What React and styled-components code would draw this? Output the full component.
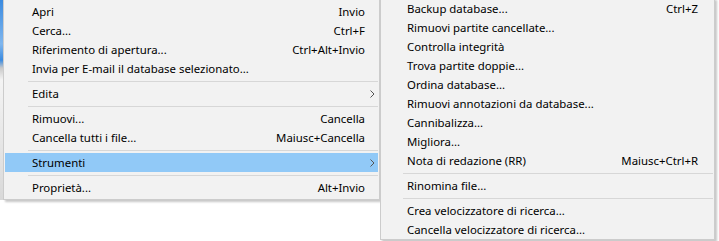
import React from 'react';
import styled, { createGlobalStyle } from 'styled-components';

const Global = createGlobalStyle`
  html, body {
    margin: 0;
    padding: 0;
    background: #ffffff;
    font-family: "Noto Sans", "Liberation Sans", sans-serif;
    font-size: 11.4px;
    color: #000;
  }
`;

const Screen = styled.div`
  width: 719px;
  height: 241px;
  overflow: hidden;
  display: flex;
  align-items: flex-start;
`;

// bit of the window behind the menus
const Backdrop = styled.div`
  width: 3px;
  height: 200px;
  flex: none;
  background: linear-gradient(
    to bottom,
    #3b8be0 0,
    #7fb6ee 22%,
    #3b8be0 30%,
    #c9c9c9 34%,
    #f4f4f4 40%,
    #d9d9d9 100%
  );
`;

const Menu = styled.div`
  box-sizing: border-box;
  flex: none;
  width: ${p => p.$width}px;
  margin-top: ${p => p.$top}px;
  background: #f2f2f2;
  border: 1px solid #cccccc;
  padding: ${p => p.$pad};
  box-shadow: 2px 2px 2px rgba(0, 0, 0, 0.22);
  display: flex;
  flex-direction: column;
`;

const Row = styled.div`
  display: grid;
  grid-template-columns: 1fr auto ${p => p.$tail}px;
  align-items: center;
  height: 19px;
  padding-left: ${p => p.$indent}px;
  background: ${p => (p.$active ? '#91c9f7' : 'transparent')};
  white-space: nowrap;
`;

const Label = styled.span`
  line-height: 19px;
`;

const Shortcut = styled.span`
  text-align: right;
  line-height: 19px;
`;

const Arrow = styled.span`
  display: flex;
  align-items: center;
  padding-left: 5px;
`;

const Separator = styled.div`
  height: 1px;
  background: #d7d7d7;
  margin: 3px 0 2px ${p => p.$indent}px;
`;

const Chevron = () => (
  <svg width="5" height="8" viewBox="0 0 5 8">
    <path d="M0.5 0.5 L4 4 L0.5 7.5" fill="none" stroke="#555" strokeWidth="1" />
  </svg>
);

const mainItems = [
  { label: 'Apri', key: 'Invio' },
  { label: 'Cerca...', key: 'Ctrl+F' },
  { label: 'Riferimento di apertura...', key: 'Ctrl+Alt+Invio' },
  { label: 'Invia per E-mail il database selezionato...' },
  'sep',
  { label: 'Edita', sub: true },
  'sep',
  { label: 'Rimuovi...', key: 'Cancella' },
  { label: 'Cancella tutti i file...', key: 'Maiusc+Cancella' },
  'sep',
  { label: 'Strumenti', sub: true, active: true },
  'sep',
  { label: 'Proprietà...', key: 'Alt+Invio' },
];

const toolItems = [
  { label: 'Backup database...', key: 'Ctrl+Z' },
  { label: 'Rimuovi partite cancellate...' },
  { label: 'Controlla integrità' },
  { label: 'Trova partite doppie...' },
  { label: 'Ordina database...' },
  { label: 'Rimuovi annotazioni da database...' },
  { label: 'Cannibalizza...' },
  { label: 'Migliora...' },
  { label: 'Nota di redazione (RR)', key: 'Maiusc+Ctrl+R' },
  'sep',
  { label: 'Rinomina file...' },
  'sep',
  { label: 'Crea velocizzatore di ricerca...' },
  { label: 'Cancella velocizzatore di ricerca...' },
];

const renderItems = (items, indent, sepIndent, tail) =>
  items.map((item, i) =>
    item === 'sep' ? (
      <Separator key={i} $indent={sepIndent} />
    ) : (
      <Row key={i} $indent={indent} $tail={tail} $active={item.active}>
        <Label>{item.label}</Label>
        <Shortcut>{item.key}</Shortcut>
        <Arrow>{item.sub && <Chevron />}</Arrow>
      </Row>
    )
  );

const App = () => (
  <>
    <Global />
    <Screen>
      <Backdrop />
      <Menu $width={377} $top={-1} $pad="2px 1px 2px 1px">
        {renderItems(mainItems, 27, 23, 13)}
      </Menu>
      <Menu $width={335} $top={-2} $pad="0 1px 0 1px">
        {renderItems(toolItems, 25, 21, 15)}
      </Menu>
    </Screen>
  </>
);

export default App;
